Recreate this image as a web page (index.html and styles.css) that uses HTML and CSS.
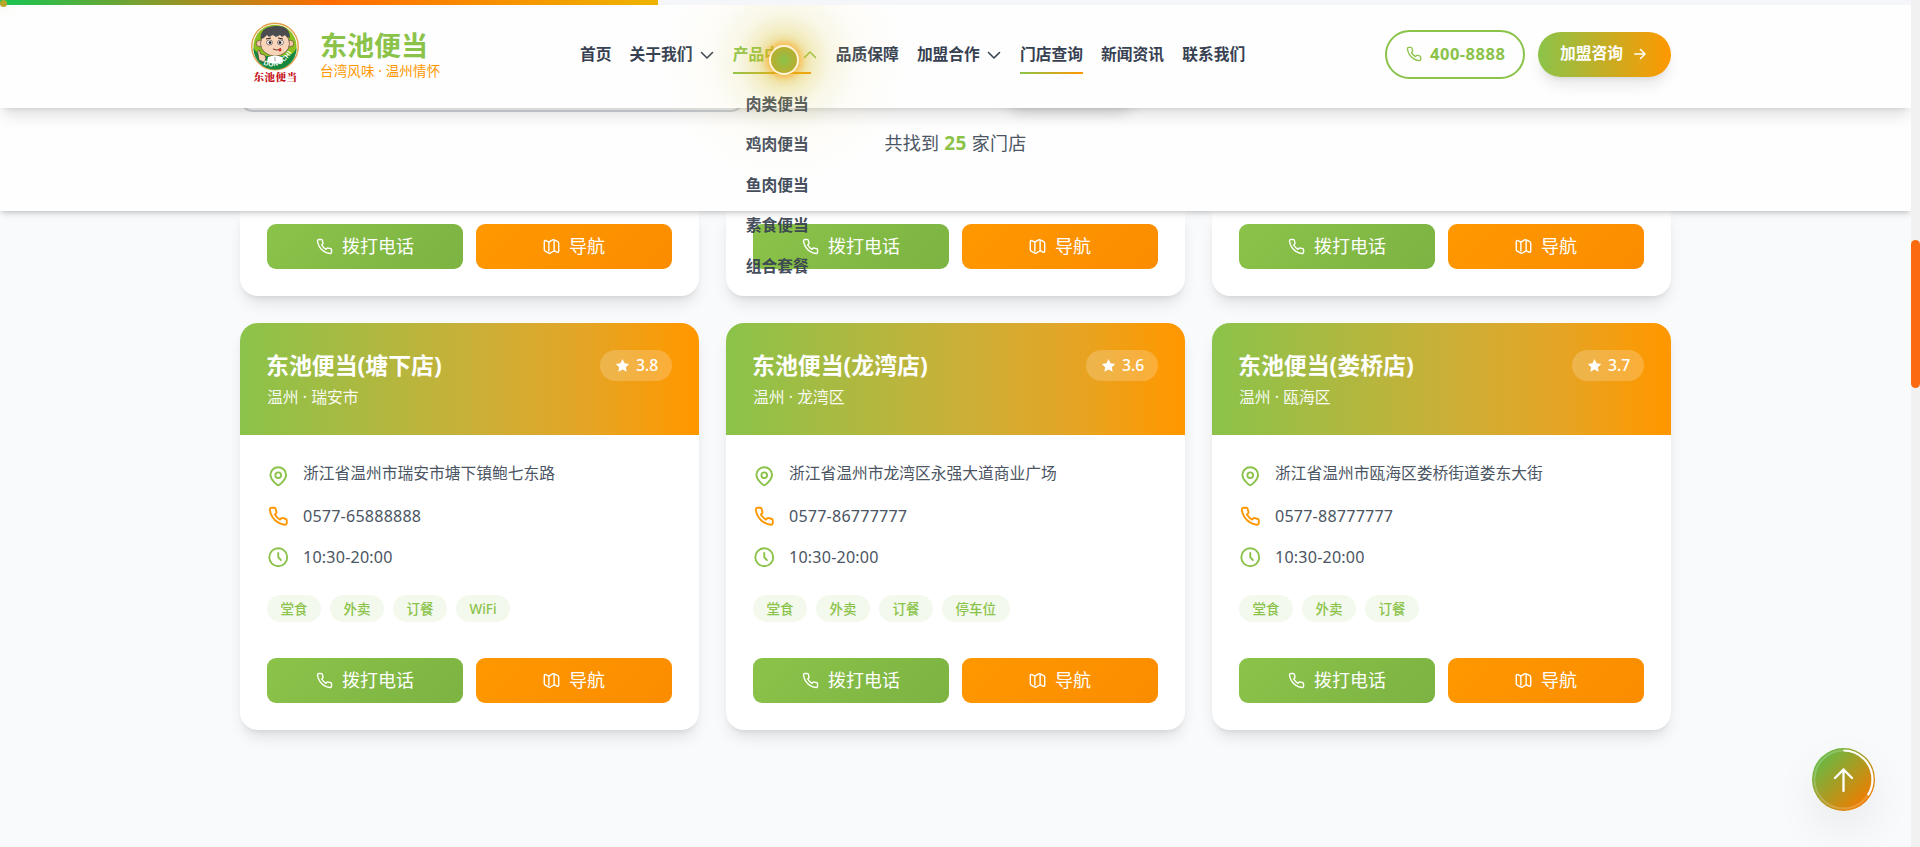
FILE: index.html
```html
<!DOCTYPE html>
<html lang="zh-CN">
<head>
<meta charset="utf-8">
<title>东池便当 - 门店查询</title>
<link rel="stylesheet" href="styles.css">
</head>
<body>
<svg class="defs" width="0" height="0" aria-hidden="true">
  <symbol id="i-phone" viewBox="0 0 24 24"><path d="M22 16.92v3a2 2 0 0 1-2.18 2 19.79 19.79 0 0 1-8.63-3.07 19.5 19.5 0 0 1-6-6 19.79 19.79 0 0 1-3.07-8.67A2 2 0 0 1 4.11 2h3a2 2 0 0 1 2 1.72c.13.96.36 1.9.7 2.81a2 2 0 0 1-.45 2.11L8.09 9.91a16 16 0 0 0 6 6l1.27-1.27a2 2 0 0 1 2.11-.45c.91.34 1.85.57 2.81.7A2 2 0 0 1 22 16.92z"/></symbol>
  <symbol id="i-pin" viewBox="0 0 24 24"><path d="M12 22.5c-1.3 0-9.2-6.300-9.200-12.200a9.200 8.800 0 0 1 18.400 0c0 5.900-7.900 12.200-9.200 12.200z"/><circle cx="12" cy="10.700" r="3.300"/></symbol>
  <symbol id="i-clock" viewBox="0 0 24 24"><circle cx="12" cy="12" r="10.500"/><path d="M12 7v5l3.200 3.300"/></symbol>
  <symbol id="i-map" viewBox="0 0 24 24"><path d="M8.300 5.500v12.800M15.700 3.500V18M1.800 5.500c0-1.800 1-2.300 2.300-1.700l4.200 2 5.200-3.200c.8-.4 1.400-.4 2.200 0l4.600 2.200c1.300.6 1.900 1.300 1.900 2.900v10.600c0 1.800-1 2.300-2.300 1.700L15.700 18l-5.200 3.200c-.8.400-1.400.4-2.200 0l-4.600-2.200c-1.300-.6-1.900-1.300-1.900-2.900z"/></symbol>
  <symbol id="i-star" viewBox="0 0 24 24"><path d="M12 1.500l3.300 6.900 7.500 1-5.500 5.200 1.400 7.500L12 18.400l-6.700 3.700 1.400-7.500L1.200 9.400l7.500-1z"/></symbol>
  <symbol id="i-down" viewBox="0 0 14 14"><path d="M1.500 4.500L7 10l5.500-5.500"/></symbol>
</svg>
<div class="screen">
  <div class="page">
    <header class="header">
      <div class="brand">
        <svg class="logo" viewBox="0 0 50 64">
          <ellipse cx="25" cy="25.500" rx="23.200" ry="23.300" fill="#fff" stroke="#e2a04a" stroke-width="1.400"/>
          <ellipse cx="25" cy="25.500" rx="21.600" ry="21.800" fill="#8bbf1f"/>
          <path d="M3.400 27a21.600 21.600 0 0 0 43.200 0q-4 8-12 8H15Q7 33 3.400 27z" fill="#14883f"/>
          <circle cx="9.500" cy="22.500" r="3.200" fill="#f3c9a8" stroke="#4a2d25" stroke-width=".6"/>
          <circle cx="40.500" cy="22.500" r="3.200" fill="#f3c9a8" stroke="#4a2d25" stroke-width=".6"/>
          <ellipse cx="25" cy="22.500" rx="14.500" ry="12.500" fill="#f8d5b8" stroke="#4a2d25" stroke-width=".6"/>
          <path d="M10.500 18Q10 6 25 5t15 12q-4-1-5-3l-3 2-2-2-4 2-3-2-4 2-2-2q-2 3-6.500 4z" fill="#4b4c50"/>
          <path d="M16 18l5-1M28 17l5 1" stroke="#2c2020" stroke-width="1"/>
          <ellipse cx="19.500" cy="21.500" rx="3" ry="2.500" fill="#fff" stroke="#3a2a2a" stroke-width=".6"/>
          <ellipse cx="30.500" cy="21.500" rx="3" ry="2.500" fill="#fff" stroke="#3a2a2a" stroke-width=".6"/>
          <circle cx="20" cy="21.600" r="1.400" fill="#221b1b"/><circle cx="30" cy="21.600" r="1.400" fill="#221b1b"/>
          <path d="M23 28q4 2.500 8-.5" fill="none" stroke="#5d2a20" stroke-width=".9"/>
          <circle cx="30" cy="29" r="1.500" fill="#dc2a2a"/>
          <path d="M18 36q7-3 14 0l1 5q-8 3-16 0z" fill="#fff"/><path d="M25 36v4" stroke="#777" stroke-width=".7"/>
          <path d="M9 39l-1-6q-1-4 1.500-4l1 4 4 1q3 4-1 7z" fill="#f8d5b8" stroke="#4a2d25" stroke-width=".6"/>
          <path id="arc" d="M13 43.500Q32 51 44.500 27" fill="none"/>
          <text class="logo-arc"><textPath href="#arc">DONGCHI</textPath></text>
          <text class="logo-cap"><tspan x="3.500">东</tspan><tspan x="14.500">池</tspan><tspan x="25.500">便</tspan><tspan x="36.500">当</tspan></text>
        </svg>
        <div class="brand-text">
          <div class="brand-name">东池便当</div>
          <div class="brand-sub">台湾风味 · 温州情怀</div>
        </div>
      </div>
      <nav class="nav">
        <a>首页</a>
        <a>关于我们<svg class="chev"><use href="#i-down"/></svg></a>
        <a class="open">产品中心<svg class="chev up"><use href="#i-down"/></svg>
          <span class="menu"><span>肉类便当</span><span>鸡肉便当</span><span>鱼肉便当</span><span>素食便当</span><span>组合套餐</span></span>
        </a>
        <a>品质保障</a>
        <a>加盟合作<svg class="chev"><use href="#i-down"/></svg></a>
        <a class="active">门店查询</a>
        <a>新闻资讯</a>
        <a>联系我们</a>
      </nav>
      <div class="actions">
        <a class="tel"><svg class="ico"><use href="#i-phone"/></svg><span>400-8888</span></a>
        <a class="join">加盟咨询<svg viewBox="0 0 12 12"><path d="M.8 6h10M6.500 1.500L11 6l-4.500 4.500"/></svg></a>
      </div>
    </header>
    <section class="filter">
      <div class="search-edge"></div>
      <div class="filter-chip"></div>
      <p class="count">共找到 <b>25</b> 家门店</p>
    </section>
    <main class="stores">
      <article class="card cut"><div class="btns"><a class="btn call"><svg class="ico"><use href="#i-phone"/></svg>拨打电话</a><a class="btn go"><svg class="ico"><use href="#i-map"/></svg>导航</a></div></article>
      <article class="card cut"><div class="btns"><a class="btn call"><svg class="ico"><use href="#i-phone"/></svg>拨打电话</a><a class="btn go"><svg class="ico"><use href="#i-map"/></svg>导航</a></div></article>
      <article class="card cut"><div class="btns"><a class="btn call"><svg class="ico"><use href="#i-phone"/></svg>拨打电话</a><a class="btn go"><svg class="ico"><use href="#i-map"/></svg>导航</a></div></article>

      <article class="card">
        <div class="head"><div><h3>东池便当(塘下店)</h3><p>温州 · 瑞安市</p></div><span class="rate"><svg><use href="#i-star"/></svg>3.8</span></div>
        <div class="body">
          <div class="row"><svg class="ico pin"><use href="#i-pin"/></svg>浙江省温州市瑞安市塘下镇鲍七东路</div>
          <div class="row num"><svg class="ico orange"><use href="#i-phone"/></svg>0577-65888888</div>
          <div class="row num"><svg class="ico"><use href="#i-clock"/></svg>10:30-20:00</div>
          <div class="tags"><span>堂食</span><span>外卖</span><span>订餐</span><span>WiFi</span></div>
          <div class="btns"><a class="btn call"><svg class="ico"><use href="#i-phone"/></svg>拨打电话</a><a class="btn go"><svg class="ico"><use href="#i-map"/></svg>导航</a></div>
        </div>
      </article>
      <article class="card">
        <div class="head"><div><h3>东池便当(龙湾店)</h3><p>温州 · 龙湾区</p></div><span class="rate"><svg><use href="#i-star"/></svg>3.6</span></div>
        <div class="body">
          <div class="row"><svg class="ico pin"><use href="#i-pin"/></svg>浙江省温州市龙湾区永强大道商业广场</div>
          <div class="row num"><svg class="ico orange"><use href="#i-phone"/></svg>0577-86777777</div>
          <div class="row num"><svg class="ico"><use href="#i-clock"/></svg>10:30-20:00</div>
          <div class="tags"><span>堂食</span><span>外卖</span><span>订餐</span><span>停车位</span></div>
          <div class="btns"><a class="btn call"><svg class="ico"><use href="#i-phone"/></svg>拨打电话</a><a class="btn go"><svg class="ico"><use href="#i-map"/></svg>导航</a></div>
        </div>
      </article>
      <article class="card">
        <div class="head"><div><h3>东池便当(娄桥店)</h3><p>温州 · 瓯海区</p></div><span class="rate"><svg><use href="#i-star"/></svg>3.7</span></div>
        <div class="body">
          <div class="row"><svg class="ico pin"><use href="#i-pin"/></svg>浙江省温州市瓯海区娄桥街道娄东大街</div>
          <div class="row num"><svg class="ico orange"><use href="#i-phone"/></svg>0577-88777777</div>
          <div class="row num"><svg class="ico"><use href="#i-clock"/></svg>10:30-20:00</div>
          <div class="tags"><span>堂食</span><span>外卖</span><span>订餐</span></div>
          <div class="btns"><a class="btn call"><svg class="ico"><use href="#i-phone"/></svg>拨打电话</a><a class="btn go"><svg class="ico"><use href="#i-map"/></svg>导航</a></div>
        </div>
      </article>
    </main>
  </div>
  <div class="scrollbar"><div class="thumb"></div></div>
  <div class="progress"><div class="progress-fill"></div></div>
  <div class="cursor-dot"></div>
  <div class="cursor-glow"></div>
  <div class="cursor"></div>
  <a class="to-top">
    <svg viewBox="0 0 63 63"><circle cx="31.500" cy="31.500" r="29" class="ring"/><circle cx="31.500" cy="31.500" r="29" class="arc" transform="rotate(-90 31.500 31.500)" stroke-dasharray="62 200"/><path d="M31.500 43V21.500M23 30l8.500-8.500L40 30" class="arrow"/></svg>
  </a>
</div>
</body>
</html>
```
FILE: styles.css
```css
* { box-sizing: border-box; margin: 0; padding: 0; }
body {
  font-family: "Noto Sans", "Noto Sans CJK SC", sans-serif;
  font-size: 18px;
  line-height: 1.5;
  color: #374151;
  background: #f9fafc;
  overflow: hidden;
}
.defs { position: absolute; }
.screen { position: relative; display: flex; width: 1920px; height: 847px; overflow: hidden; }
.page { flex: 1; display: flex; flex-direction: column; min-width: 0; overflow: hidden; }
svg { flex: none; }
.ico { width: 18px; height: 18px; fill: none; stroke: currentColor; stroke-width: 2; stroke-linecap: round; stroke-linejoin: round; }

/* header */
.header {
  position: relative; z-index: 3; height: 108px; flex: none;
  display: flex; align-items: center; padding: 0 240px;
  background: #fefefe;
  box-shadow: 0 10px 15px -3px rgba(0,0,0,.12), 0 4px 6px -4px rgba(0,0,0,.14);
}
.brand { display: flex; align-items: center; width: 340px; padding-left: 10px; }
.logo { width: 50px; height: 64px; margin-top: -3px; }
.logo-arc { font: 700 6.500px "Liberation Sans", sans-serif; fill: #fff; letter-spacing: .6px; }
.logo-cap { font: 900 10.500px "Noto Serif CJK SC", "Noto Sans CJK SC", serif; fill: #c8161d; transform: translateY(60px); }
.brand-text { padding-left: 20px; }
.brand-name { font-size: 27px; font-weight: 700; line-height: 30px; color: #8bc34a; margin-top: 4px; white-space: nowrap; }
.brand-sub { font-size: 13.500px; line-height: 20px; color: #ff9800; letter-spacing: .15px; }
.nav { display: flex; gap: 18.100px; font-size: 15.750px; font-weight: 600; color: #374151; padding-top: 1px; }
.nav a { position: relative; display: flex; align-items: center; gap: 8px; height: 36px; white-space: nowrap; }
.chev { width: 14px; height: 14px; margin-left: -1px; margin-right: 1px; fill: none; stroke: currentColor; stroke-width: 1.600; stroke-linecap: round; stroke-linejoin: round; }
.up { transform: rotate(180deg); }
.nav .open { color: #8bc34a; }
.nav .open::after, .nav .active::after {
  content: ""; position: absolute; left: 0; bottom: -1px; width: 100%; height: 2px;
  background: linear-gradient(90deg, #8bc34a, #ff9800);
}
.nav .open::after { width: 78px; }
.menu { position: absolute; left: 13px; top: 47px; display: flex; flex-direction: column; color: #374151; opacity: .93; }
.menu span { height: 40.500px; line-height: 40.500px; }
.actions { display: flex; align-items: center; gap: 13px; margin-left: auto; }
.tel {
  display: flex; align-items: center; gap: 8px; width: 140px; height: 49px; padding-left: 19px;
  border: 2px solid #8bc34a; border-radius: 25px; color: #8bc34a; font-size: 16.500px; font-weight: 700; letter-spacing: .5px;
}
.tel .ico { width: 16px; height: 16px; stroke-width: 2; }
.join {
  display: flex; align-items: center; gap: 11px; width: 133px; height: 45px; padding-left: 22px;
  border-radius: 23px; color: #fff; font-size: 15.750px; font-weight: 700; white-space: nowrap;
  background: linear-gradient(90deg, #8bc34a, #ff9800);
  box-shadow: 0 10px 15px -3px rgba(0,0,0,.1), 0 4px 6px -4px rgba(0,0,0,.1);
}
.join svg { width: 12px; height: 12px; fill: none; stroke: #fff; stroke-width: 1.500; stroke-linecap: round; stroke-linejoin: round; }

/* result bar */
.filter {
  position: relative; z-index: 2; height: 103px; flex: none; padding: 0 240px;
  background: #fefefe; box-shadow: 0 4px 6px -1px rgba(0,0,0,.14), 0 2px 4px -2px rgba(0,0,0,.14);
}
.search-edge { width: 504px; height: 18px; margin-top: -14px; border: 2px solid #d1d5db; border-top: 0; border-radius: 0 0 13px 13px; }
.filter-chip { position: absolute; left: 1007px; top: -48px; width: 126px; height: 45px; border-radius: 12px; box-shadow: 0 10px 15px -3px rgba(0,0,0,.15); }
.count { margin-top: 18px; text-align: center; color: #4b5563; letter-spacing: .3px; }
.count b { color: #8bc34a; font-size: 19px; line-height: 18px; }

/* store cards */
.stores { display: grid; grid-template-columns: repeat(3, 459px); gap: 27px; padding: 0 240px; align-content: start; }
.card {
  background: #fff; border-radius: 18px; overflow: hidden;
  box-shadow: 0 10px 15px -3px rgba(0,0,0,.1), 0 4px 6px -4px rgba(0,0,0,.12);
}
.cut { border-radius: 0 0 18px 18px; padding: 13px 27px 27px; height: 85px; }
.head {
  display: flex; justify-content: space-between; align-items: flex-start; height: 112px; padding: 27px 27px 27px 26px;
  color: #fff; background: linear-gradient(90deg, #8bc34a, #c9b038 50%, #e4a526 75%, #ff9800 98%);
}
.head h3 { font-size: 22.900px; line-height: 32px; font-weight: 700; white-space: nowrap; }
.head p { font-size: 15.850px; line-height: 22px; margin-top: 4px; padding-left: 1px; opacity: .93; }
.rate {
  display: flex; align-items: center; gap: 6px; width: 72px; height: 31px; padding-left: 15px;
  border-radius: 16px; font-size: 15.750px; font-weight: 500; background: rgba(255,255,255,.2);
}
.rate svg { width: 15px; height: 15px; fill: #fff; }
.body { padding: 27px; height: 295px; display: flex; flex-direction: column; }
.row { display: flex; align-items: center; gap: 13.500px; height: 24px; margin-bottom: 18px; font-size: 15.750px; color: #4b5563; white-space: nowrap; }
.row .ico { width: 22.500px; height: 22.500px; padding: 1px; color: #8bc34a; stroke-width: 2.200; }
.row .pin { position: relative; top: 2px; }
.row .orange { color: #ff9800; }
.row.num { letter-spacing: .2px; font-size: 16.100px; height: 25px; margin-bottom: 16px; }
.tags { display: flex; gap: 9px; margin-top: 9px; }
.tags span {
  height: 27px; line-height: 28px; padding: 0 13.500px; border-radius: 14px;
  font-size: 13.500px; font-weight: 500; color: #8bc34a; background: #f3f9ed;
}
.btns { display: flex; gap: 13px; margin-top: auto; }
.btn { flex: 1; display: flex; align-items: center; justify-content: center; gap: 9px; height: 45px; border-radius: 9px; color: #fff; font-weight: 400; }
.btn .ico { stroke-width: 2; width: 17px; height: 17px; }
.call { background: linear-gradient(135deg, #8bc34a, #7cb342); }
.go { background: linear-gradient(135deg, #ff9800, #fb8c00); }

/* overlays */
.scrollbar { width: 9px; background: #f1f1f1; padding-top: 240px; }
.thumb { height: 148px; border-radius: 5px; background: #fb6a10; }
.progress { position: absolute; z-index: 5; left: 0; top: 0; width: 1911px; height: 5px; background: #f5f6f9; }
.progress-fill { width: 658px; height: 5px; background: linear-gradient(90deg, #16c653, #ff6b00 50%, #eeb400); }
.cursor-dot { position: absolute; z-index: 6; left: 0; top: 0; width: 7px; height: 7px; border-radius: 50%; background: #b9a62c; box-shadow: 0 0 18px rgba(139,195,74,.3); }
.cursor-glow {
  position: absolute; z-index: 4; left: 649px; top: -75px; width: 270px; height: 270px; border-radius: 50%;
  background: radial-gradient(circle, rgba(215,195,50,.36) 10%, rgba(220,205,90,.14) 25%, rgba(240,225,150,.06) 40%, rgba(255,240,200,0) 65%);
}
.cursor {
  position: absolute; z-index: 6; left: 769px; top: 45px; width: 30px; height: 30px; border-radius: 50%;
  border: 2px solid #fdf3d6; background: radial-gradient(circle, #8bc34a, #cba524);
  box-shadow: 0 0 10px 1px rgba(255,152,0,.85), 0 0 24px rgba(234,179,8,.35);
}
.to-top {
  position: absolute; z-index: 4; left: 1812px; top: 748px; width: 63px; height: 63px; border-radius: 50%;
  background: linear-gradient(135deg, #4cc552, #ef7d00 85%); box-shadow: 0 18px 45px rgba(0,0,0,.07);
}
.to-top svg { display: block; fill: none; stroke: #fff; stroke-linecap: round; stroke-linejoin: round; }
.ring { stroke: rgba(255,255,255,.2); stroke-width: 2; }
.arc { stroke-width: 2.200; stroke-linecap: butt; }
.arrow { stroke-width: 2.300; }
```
